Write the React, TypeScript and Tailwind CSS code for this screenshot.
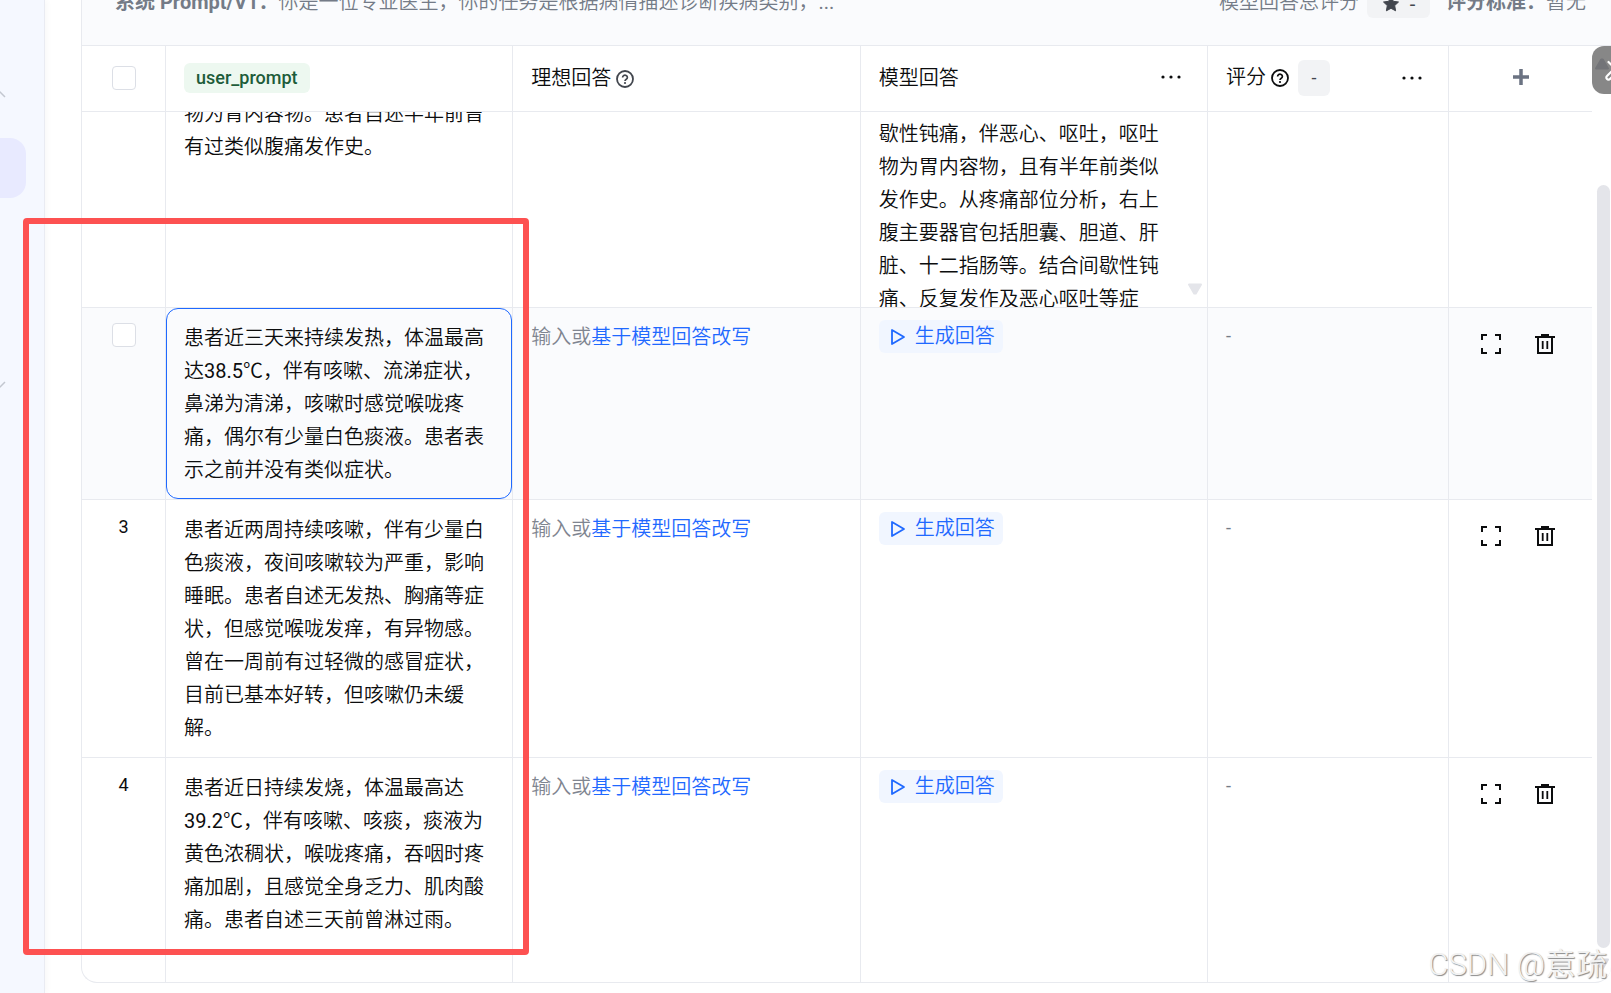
import React from 'react';

interface EvalRow {
    id: number;
    prompt: string;
    active?: boolean;
    heightClass: string;
}

const systemPrompt = '你是一位专业医生\uFF0C你的任务是根据病情描述诊断疾病类别\uFF0C...';

const answer =
    '歇性钝痛\uFF0C伴恶心、呕吐\uFF0C呕吐物为胃内容物\uFF0C且有半年前类似发作史。从疼痛部位分析\uFF0C右上腹主要器官包括胆囊、胆道、肝脏、十二指肠等。结合间歇性钝痛、反复发作及恶心呕吐等症';

const rows: EvalRow[] = [
    {
        id: 2,
        prompt: '患者近三天来持续发热\uFF0C体温最高达38.5℃\uFF0C伴有咳嗽、流涕症状\uFF0C鼻涕为清涕\uFF0C咳嗽时感觉喉咙疼痛\uFF0C偶尔有少量白色痰液。患者表示之前并没有类似症状。',
        active: true,
        heightClass: 'h-[192px]'
    },
    {
        id: 3,
        prompt: '患者近两周持续咳嗽\uFF0C伴有少量白色痰液\uFF0C夜间咳嗽较为严重\uFF0C影响睡眠。患者自述无发热、胸痛等症状\uFF0C但感觉喉咙发痒\uFF0C有异物感。曾在一周前有过轻微的感冒症状\uFF0C目前已基本好转\uFF0C但咳嗽仍未缓解。',
        heightClass: 'h-[258px]'
    },
    {
        id: 4,
        prompt: '患者近日持续发烧\uFF0C体温最高达39.2℃\uFF0C伴有咳嗽、咳痰\uFF0C痰液为黄色浓稠状\uFF0C喉咙疼痛\uFF0C吞咽时疼痛加剧\uFF0C且感觉全身乏力、肌肉酸痛。患者自述三天前曾淋过雨。',
        heightClass: 'h-[224px]'
    }
];

const cell = 'border-r border-b border-[#e8eaef]';
const checkbox = 'block mx-auto size-6 appearance-none rounded-sm border border-[#dcdfe6] bg-white';

const HelpIcon = ({ className = '' }: { className?: string }) => (
    <svg width="20" height="20" viewBox="0 0 20 20" fill="none" stroke="currentColor" className={`shrink-0 ${className}`}>
        <circle cx="10" cy="10" r="8" strokeWidth="1.8" />
        <path d="M7.6 8.4a2.4 2.2 0 1 1 3.7 1.8c-.9.6-1.3.9-1.3 1.7" strokeWidth="1.7" />
        <circle cx="10" cy="14" r="1.1" fill="currentColor" stroke="none" />
    </svg>
);

const DotsIcon = () => (
    <svg width="20" height="20" viewBox="0 0 20 20" fill="currentColor" className="block">
        <circle cx="2" cy="10" r="1.6" />
        <circle cx="10" cy="10" r="1.6" />
        <circle cx="18" cy="10" r="1.6" />
    </svg>
);

const PlayIcon = () => (
    <svg width="16" height="18" viewBox="0 0 16 18" fill="none" stroke="currentColor" strokeWidth="1.8" strokeLinejoin="round">
        <path d="M1 2v14l12-7z" />
    </svg>
);

const ExpandIcon = () => (
    <svg width="20" height="20" viewBox="0 0 20 20" fill="none" stroke="currentColor" strokeWidth="2" className="block">
        <path d="M1 6V1h5M14 1h5v5M19 14v5h-5M6 19H1v-5" />
    </svg>
);

const TrashIcon = () => (
    <svg width="20" height="20" viewBox="0 0 20 20" fill="none" stroke="currentColor" className="block">
        <path d="M6 1h8" strokeWidth="2" />
        <path d="M0 3h20" strokeWidth="2" />
        <path d="M3 3.5V19h14V3.5" strokeWidth="2" />
        <path d="M7.7 7v8M12.3 7v8" strokeWidth="1.8" />
    </svg>
);

const StarIcon = () => (
    <svg width="18" height="18" viewBox="0 0 18 18" fill="currentColor" stroke="currentColor" strokeLinejoin="round">
        <path d="M9 1.5l2.3 4.8 5.2.7-3.8 3.6.9 5.2L9 13.3l-4.6 2.5.9-5.2L1.5 7l5.2-.7z" />
    </svg>
);

const Triangle = ({ className = '' }: { className?: string }) => (
    <svg width="16" height="12" viewBox="0 0 16 12" fill="currentColor" stroke="currentColor" strokeWidth="2" strokeLinejoin="round" className={className}>
        <path d="M2 1.5h12L8.8 10.5H7.2z" />
    </svg>
);

const Sidebar = () => (
    <aside className="w-[45px] shrink-0 overflow-hidden border-r border-[#e9ebf2] bg-[#f5f8ff] shadow-[2px_0_6px_rgba(0,0,0,0.03)]">
        <svg width="10" height="16" viewBox="0 0 10 16" fill="none" stroke="#c3c7d0" strokeWidth="1.5" className="mt-[86px]">
            <path d="M-6 11L-1 5L5 11" />
        </svg>
        <button aria-label="评测" className="mt-9 block h-[60px] w-[26px] rounded-r-2xl bg-[#e8eaff]" />
        <svg width="10" height="16" viewBox="0 0 10 16" fill="none" stroke="#c3c7d0" strokeWidth="1.5" className="mt-[180px]">
            <path d="M-6 4L-1 10L5 4" />
        </svg>
    </aside>
);

const SummaryBar = () => (
    <div className="flex h-[46px] items-start justify-between overflow-hidden border-b border-[#e8eaef] bg-[#fafbfd] pr-[25px] pl-[33px] text-[#747b87]">
        <p className="-mt-3.5 whitespace-nowrap">
            <strong className="font-['Roboto','Noto_Sans_CJK_SC',sans-serif]">系统 Prompt/V1{'\uFF1A'}</strong>
            <span>{systemPrompt}</span>
        </p>
        <div className="-mt-[18px] flex h-9 items-center whitespace-nowrap">
            <span className="mt-1">模型回答总评分</span>
            <span className="mr-4 ml-2 flex h-9 w-[63px] items-center justify-center gap-2.5 rounded-md bg-[#f2f3f5] pt-2 text-[#42464e]">
                <StarIcon />
                <span>-</span>
            </span>
            <strong className="mt-1 font-['Roboto','Noto_Sans_CJK_SC',sans-serif]">评分标准{'\uFF1A'}</strong>
            <span className="mt-1">暂无</span>
        </div>
    </div>
);

const HeaderRow = () => (
    <tr className="h-[66px] text-left">
        <th className={`${cell} pb-0.5 text-center align-middle`}>
            <input type="checkbox" aria-label="全选" className={checkbox} />
        </th>
        <th className={`${cell} pb-0.5 pl-[18px] font-normal`}>
            <div className="flex">
                <span className="flex h-[30px] items-center rounded-md bg-[#edf8f0] px-3 text-[18px] font-medium text-[#1d5c3a]">
                    user_prompt
                </span>
            </div>
        </th>
        <th className={`${cell} pl-[18px] font-normal`}>
            <div className="flex items-center gap-1">
                理想回答
                <HelpIcon className="text-[#42464e]" />
            </div>
        </th>
        <th className={`${cell} px-[18px] font-normal`}>
            <div className="flex items-center justify-between pr-2">
                模型回答
                <button aria-label="模型回答更多操作" className="pb-1">
                    <DotsIcon />
                </button>
            </div>
        </th>
        <th className={`${cell} px-[18px] pb-0.5 font-normal`}>
            <div className="flex items-center pr-2">
                评分
                <HelpIcon className="mr-2 ml-1" />
                <span className="flex h-9 w-8 items-center justify-center rounded-md bg-[#f2f3f5] text-[18px] text-[#42464e]">-</span>
                <button aria-label="评分更多操作" className="ml-auto">
                    <DotsIcon />
                </button>
            </div>
        </th>
        <th className="border-b border-[#e8eaef] text-center align-middle">
            <button aria-label="添加列" className="pt-0.5 text-[#6b7382]">
                <svg width="16" height="16" viewBox="0 0 16 16" stroke="currentColor" strokeWidth="3.5" className="block">
                    <path d="M8 0v16M0 8h16" />
                </svg>
            </button>
        </th>
    </tr>
);

const ScrolledRow = () => (
    <tr className="align-top">
        <td className={cell} />
        <td className={`${cell} px-[18px]`}>
            <div className="h-[195px] overflow-hidden">
                <p className="-mt-3.5">物为胃内容物。患者自述半年前曾有过类似腹痛发作史。</p>
            </div>
        </td>
        <td className={cell} />
        <td className={`${cell} relative pl-[18px]`}>
            <div className="h-[195px] overflow-hidden pt-1.5 pr-[42px]">
                <p>{answer}</p>
            </div>
            <Triangle className="absolute right-1 bottom-3 text-[#e4e5ea]" />
        </td>
        <td className={cell} />
        <td className="border-b border-[#e8eaef]" />
    </tr>
);

const DataRow = ({ row, last }: { row: EvalRow; last: boolean }) => {
    const border = last ? 'border-r border-[#e8eaef]' : cell;

    return (
        <tr className={`align-top ${row.heightClass} ${row.active ? 'bg-[#fafbfd]' : ''}`}>
            <td className={`${border} text-center`}>
                {row.active ? (
                    <div className="pt-[15px]">
                        <input type="checkbox" aria-label={`选择第${row.id}行`} className={checkbox} />
                    </div>
                ) : (
                    <div className="pt-2.5 text-[18px]">{row.id}</div>
                )}
            </td>
            <td className={border}>
                <div className={`border px-[17px] pt-[13px] pb-[11px] ${row.active ? 'rounded-xl border-[#1f69ff]' : 'border-transparent'}`}>
                    {row.prompt}
                </div>
            </td>
            <td className={`${border} pt-[13px] pl-[18px] text-[#7f8590]`}>
                输入或
                <a href="#" className="text-[#1f69ff]">基于模型回答改写</a>
            </td>
            <td className={`${border} pt-3 pl-[18px]`}>
                <button className="flex h-[33px] items-center gap-2 rounded-md bg-[#f1f6ff] pr-2 pl-3 text-[#1f69ff]">
                    <PlayIcon />
                    生成回答
                </button>
            </td>
            <td className={`${border} pt-[11px] pl-[18px] text-[18px] text-[#747b87]`}>-</td>
            <td className={last ? '' : 'border-b border-[#e8eaef]'}>
                <div className="flex gap-[34px] pt-[26px] pl-8">
                    <button aria-label="展开"><ExpandIcon /></button>
                    <button aria-label="删除"><TrashIcon /></button>
                </div>
            </td>
        </tr>
    );
};

const App: React.FC = () => {
    return (
        <div className="relative flex min-h-screen overflow-hidden bg-white font-['Roboto','Noto_Sans_CJK_SC_DemiLight','Noto_Sans_CJK_SC',sans-serif] text-[20px] leading-[33px] text-[#0c0d0e]">
            <Sidebar />
            <main className="min-w-0 flex-1 pb-2.5 pl-9">
                <div className="overflow-hidden rounded-b-2xl border-b border-l border-[#e8eaef]">
                    <SummaryBar />
                    <div className="flex">
                        <div className="min-w-0 flex-1">
                            <table className="w-full table-fixed border-separate border-spacing-0">
                                <colgroup>
                                    <col className="w-[84px]" />
                                    <col />
                                    <col />
                                    <col />
                                    <col className="w-[241px]" />
                                    <col className="w-[143px]" />
                                </colgroup>
                                <thead>
                                    <HeaderRow />
                                </thead>
                                <tbody>
                                    <ScrolledRow />
                                    {rows.map((row, i) => (
                                        <DataRow key={row.id} row={row} last={i === rows.length - 1} />
                                    ))}
                                </tbody>
                            </table>
                        </div>
                        <div className="flex w-[19px] shrink-0 flex-col items-end py-3 pr-px text-[#d9dbe2]">
                            <Triangle className="rotate-180" />
                            <div className="mt-[115px] mb-2.5 w-[13px] flex-1 rounded-full bg-[#e4e5ea]" />
                            <Triangle />
                        </div>
                    </div>
                </div>
            </main>

            {/* collapsed tool handle on the window edge */}
            <button aria-label="工具" className="absolute top-[46px] right-0 h-12 w-[19px] overflow-hidden rounded-l-xl bg-black/47">
                <svg width="19" height="48" viewBox="0 0 19 48" fill="none" stroke="#fff" strokeWidth="2.2" strokeLinecap="round">
                    <path d="M16.5 16l6 6" />
                    <path d="M20 25l-5 5a2 2 0 0 0 0 3a2 2 0 0 0 3 0l3-3" />
                </svg>
            </button>

            <div className="pointer-events-none absolute top-[218px] left-[23px] h-[737px] w-[506px] rounded-sm border-[6px] border-[#fd5151]" />
            <div className="pointer-events-none absolute right-1 bottom-2 text-[31px] leading-[40px] font-light whitespace-nowrap text-[#f2f2f2] [text-shadow:1px_1px_1px_#8a8a8a]">
                CSDN @意疏
            </div>
        </div>
    );
};

export default App;
